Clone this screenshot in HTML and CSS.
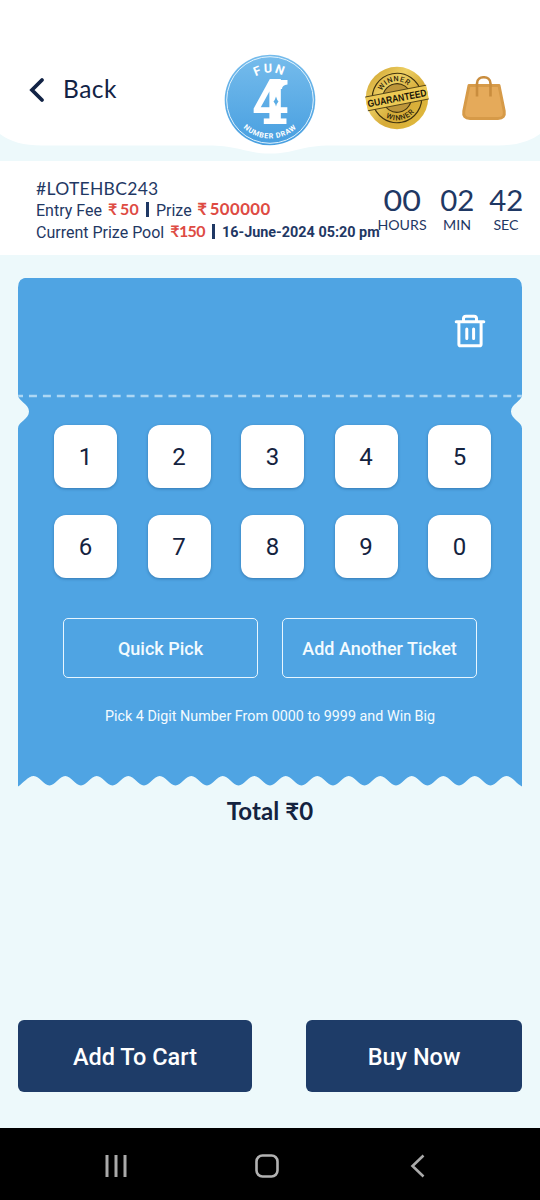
FILE: index.html
```html
<!DOCTYPE html>
<html lang="en">
<head>
<meta charset="utf-8">
<meta name="viewport" content="width=device-width, initial-scale=1">
<title>Fun 4 Number Draw</title>
<link rel="stylesheet" href="styles.css">
</head>
<body>
<div class="app">
  <header class="header">
    <a class="back">
      <svg class="back-icon" width="16" height="26" viewBox="0 0 16 26"><path d="M13 3 3 13 13 23" fill="none" stroke="#122345" stroke-width="3.8" stroke-linecap="round" stroke-linejoin="miter"/></svg>
      <span class="back-label">Back</span>
    </a>
    <svg class="logo" width="92" height="92" viewBox="-46 -46 92 92">
      <defs>
        <linearGradient id="sky" x1="0" y1="0" x2="0" y2="1"><stop offset="0" stop-color="#76bcec"/><stop offset="1" stop-color="#489fe0"/></linearGradient>
        <path id="arcTop" d="M-27.5 0A27.5 27.5 0 0 1 27.5 0"/>
        <path id="arcBottom" d="M-38.5 0A38.5 38.5 0 0 0 38.5 0"/>
      </defs>
      <circle r="45.3" fill="url(#sky)"/>
      <circle r="43.3" fill="none" stroke="#e0f2fd" stroke-width="1"/>
      <text class="logo-fun"><textPath href="#arcTop" startOffset="50%" text-anchor="middle">FUN</textPath></text>
      <text class="logo-four" x="0.5" y="23" text-anchor="middle" textLength="36" lengthAdjust="spacingAndGlyphs">4</text>
      <path d="M9-20H17.5V-15.500Q12-15 12-11H9Z" fill="#fff"/>
      <path d="M6-3.500Q7 0 8.500 1.500Q7 3 6 6.500Q5 3 3.500 1.500Q5 0 6-3.500Z" fill="#5bade5"/>
      <text class="logo-draw"><textPath href="#arcBottom" startOffset="50%" text-anchor="middle">NUMBER DRAW</textPath></text>
    </svg>
    <div class="header-right">
      <svg class="seal" width="66" height="66" viewBox="-33 -33 66 66">
        <defs>
          <linearGradient id="gold" x1="0" y1="0" x2="1" y2="1"><stop offset="0" stop-color="#c99a25"/><stop offset=".35" stop-color="#edcf62"/><stop offset=".6" stop-color="#d6ab38"/><stop offset="1" stop-color="#e3bd3e"/></linearGradient>
          <path id="sealTop" d="M-16.8 0A16.8 16.8 0 0 1 16.8 0"/>
          <path id="sealBottom" d="M-22.3 0A22.3 22.3 0 0 0 22.3 0"/>
        </defs>
        <circle r="31.2" fill="url(#gold)"/>
        <g transform="rotate(-11)">
          <circle r="24.7" fill="none" stroke="#40330f" stroke-width="1.2"/>
          <circle r="14.3" fill="#bd963a" stroke="#40330f" stroke-width="1.1"/>
          <text class="seal-small"><textPath href="#sealTop" startOffset="50%" text-anchor="middle">WINNER</textPath></text>
          <text class="seal-small"><textPath href="#sealBottom" startOffset="50%" text-anchor="middle">WINNER</textPath></text>
          <rect x="-31" y="-7" width="62" height="14" fill="#ecc954"/>
          <path d="M-31-7H31M-31 7H31" stroke="#40330f" stroke-width=".8"/>
          <text class="seal-main" x="0" y="3.7" text-anchor="middle" textLength="60" lengthAdjust="spacingAndGlyphs">GUARANTEED</text>
        </g>
      </svg>
      <svg class="bag" width="46" height="46" viewBox="0 0 46 46">
        <path d="M8 9.5H38L43.2 35C44 40 42 42.5 37 42.5H9C4 42.5 2 40 2.8 35Z" fill="#e5aa5a" stroke="#d69a48" stroke-width="3" stroke-linejoin="round"/>
        <path d="M16 20.5V7.5C16-.8 29.5-.8 29.5 7.5V20.5" fill="none" stroke="#c98d3e" stroke-width="2.6"/>
      </svg>
    </div>
  </header>

  <section class="info">
    <div class="details">
      <div class="code">#LOTEHBC243</div>
      <div class="line"><span>Entry Fee</span><b class="amount fee">₹ 50</b><i class="bar"></i><span>Prize</span><b class="amount prize">₹ 500000</b></div>
      <div class="line"><span>Current Prize Pool</span><b class="amount pool">₹150</b><i class="bar"></i><b class="date">16-June-2024 05:20 pm</b></div>
    </div>
    <div class="timer">
      <div class="unit hours"><b>00</b><span>HOURS</span></div>
      <div class="unit min"><b>02</b><span>MIN</span></div>
      <div class="unit sec"><b>42</b><span>SEC</span></div>
    </div>
  </section>

  <main class="content">
    <section class="ticket">
      <div class="ticket-top">
        <svg width="32" height="34" viewBox="0 0 32 34" fill="none" stroke="#fff" stroke-width="3" stroke-linecap="round" stroke-linejoin="round"><path d="M2.2 7.7H29.8M4.9 8V30.2Q4.9 31.8 6.5 31.8H25.5Q27.1 31.8 27.1 30.2V8M9.5 7V4.6Q9.5 2.2 12 2.2H20Q22.5 2.2 22.5 4.6V7M12.8 15V24.4M19.6 15V24.4"/></svg>
      </div>
      <svg class="perforation" width="504" height="4" viewBox="0 0 504 4"><path d="M-3 2H504" stroke="#add7f4" stroke-width="2.6" stroke-dasharray="8 5.95"/></svg>
      <div class="keys">
        <button>1</button><button>2</button><button>3</button><button>4</button><button>5</button>
        <button>6</button><button>7</button><button>8</button><button>9</button><button>0</button>
      </div>
      <div class="picks"><button>Quick Pick</button><button>Add Another Ticket</button></div>
      <p class="hint">Pick 4 Digit Number From 0000 to 9999 and Win Big</p>
    </section>
    <div class="total">Total ₹0</div>
  </main>

  <footer class="actions"><button class="cart">Add To Cart</button><button class="buy">Buy Now</button></footer>

  <nav class="system">
    <svg width="24" height="26" viewBox="0 0 24 26"><path d="M3 2V24M12 2V24M21 2V24" stroke="#aaa" stroke-width="3"/></svg>
    <svg class="home" width="26" height="26" viewBox="0 0 26 26"><rect x="2.5" y="2.5" width="21" height="21" rx="6" fill="none" stroke="#b2b2b2" stroke-width="2.6"/></svg>
    <svg width="18" height="26" viewBox="0 0 18 26"><path d="M14.5 2.5 3.5 13 14.5 23.5" fill="none" stroke="#aaa" stroke-width="2.6"/></svg>
  </nav>
</div>
</body>
</html>
```

FILE: styles.css
```css
* { box-sizing: border-box; }
body { margin: 0; background: #edf9fb; font-family: Roboto, sans-serif; color: #1f3864; }
button { margin: 0; padding: 0; border: 0; font-family: Roboto, sans-serif; }
svg { display: block; flex: none; }
.app { width: 540px; height: 1200px; display: flex; flex-direction: column; overflow: hidden; }

.header {
  height: 161px; padding-top: 54px; flex: none;
  display: grid; grid-template-columns: 224px 92px 1fr; align-items: start;
  background: #fff;
  clip-path: path("M0 0H540V134Q525 145.5 498 145.5H332C300 145.5 295 153.5 270 153.5C245 153.5 240 145.500 208 145.5H42Q15 145.5 0 134Z");
}
.back { display: flex; align-items: center; padding: 21px 0 0 29px; gap: 18px; }
.back-icon { margin-top: 1px; }
.back-label { font-family: Lato, sans-serif; font-size: 24.5px; line-height: 28px; letter-spacing: .5px; color: #122345; }
.logo-fun { font: 700 12.5px Roboto, sans-serif; fill: #fff; letter-spacing: 2px; }
.logo-four { font: 700 57px "DejaVu Serif", serif; fill: #fff; stroke: #fff; stroke-width: 2px; }
.logo-draw { font: 700 7.2px Roboto, sans-serif; fill: #fff; letter-spacing: .7px; }
.header-right { display: flex; padding: 11px 0 0 48px; gap: 31px; }
.seal { overflow: visible; }
.bag { margin-top: 11px; }
.seal-small { font: 500 7.3px Roboto, sans-serif; fill: #30270d; letter-spacing: .7px; }
.seal-main { font: 700 10px "Liberation Sans", sans-serif; fill: #191507; }

.info { height: 94px; flex: none; background: #fff; padding: 17px 0 0 36px; display: flex; }
.details { width: 346px; white-space: nowrap; flex: none; }
.code { font: 400 17.5px/22px Lato, sans-serif; letter-spacing: .3px; }
.line { display: flex; align-items: center; height: 21.5px; font-size: 16px; }
.amount { color: #de4b43; font: 700 16px/20px Lato, sans-serif; margin-left: 6px; position: relative; top: -1.5px; }
.fee { word-spacing: -1.5px; letter-spacing: .2px; }
.prize { font-size: 16.8px; word-spacing: -2px; letter-spacing: .4px; margin-left: 5.5px; }
.pool { letter-spacing: -.6px; }
.bar { flex: none; width: 2.5px; height: 15px; background: #1f3864; margin: 0 7px 0 7.5px; position: relative; top: -1px; }
.date { font-size: 14.4px; font-weight: 700; }
.timer { display: flex; font-family: Lato, sans-serif; padding-top: 6px; }
.unit { display: flex; flex-direction: column; align-items: center; }
.unit b { font-weight: 400; font-size: 28px; line-height: 32px; transform: scaleX(1.05); }
.unit span { font-size: 14.2px; line-height: 18px; }
.hours { width: 52px; margin-left: -6px; }
.hours b { transform: scaleX(1.15); }
.min { width: 56px; margin-left: 1px; }
.sec { width: 42px; }

.content { flex: 1; padding: 22.5px 18px 0; }
.ticket {
  height: 509px; background: #4fa4e3; display: flex; flex-direction: column;
  clip-path: path("M0 10Q0 0 10 0H494Q504 0 504 10V117C504 124 493 126 493 134C493 142 504 144 504 151V509C498 506 494 498.500 488.25 498.5C482.5 498.5 478 508 472.5 508C467 508 462.500 498.5 456.75 498.5C451 498.5 446.5 508 441 508C435.5 508 431 498.5 425.25 498.5C419.5 498.5 415 508 409.5 508C404 508 399.5 498.5 393.75 498.5C388 498.5 383.5 508 378 508C372.5 508 368 498.5 362.25 498.5C356.5 498.5 352 508 346.5 508C341 508 336.5 498.5 330.75 498.5C325 498.5 320.5 508 315 508C309.5 508 305 498.5 299.25 498.5C293.5 498.5 289 508 283.5 508C278 508 273.5 498.5 267.75 498.5C262 498.5 257.5 508 252 508C246.5 508 242 498.5 236.25 498.5C230.5 498.5 226 508 220.5 508C215 508 210.5 498.5 204.75 498.5C199 498.5 194.5 508 189 508C183.5 508 179 498.5 173.25 498.5C167.5 498.5 163 508 157.5 508C152 508 147.5 498.5 141.75 498.5C136 498.5 131.5 508 126 508C120.5 508 116 498.5 110.25 498.5C104.5 498.5 100 508 94.5 508C89 508 84.5 498.5 78.75 498.5C73 498.5 68.5 508 63 508C57.5 508 53 498.5 47.25 498.5C41.5 498.5 37 508 31.5 508C26 508 21.5 498.5 15.75 498.5C10 498.5 5 506 0 509V151C0 144 11 142 11 134C11 126 0 124 0 117Z");
}
.ticket-top { height: 116px; display: flex; justify-content: flex-end; padding: 36px 36px 0 0; }
.keys { display: grid; grid-template-columns: repeat(5, 63px); justify-content: space-between; row-gap: 27px; padding: 27px 31px 0 36px; }
.keys button { height: 63px; padding-top: 1px; border-radius: 12px; background: #fff; color: #14233f; font-size: 24px; box-shadow: 0 1px 3px rgba(20, 70, 120, .45); }
.picks { display: flex; gap: 24px; padding: 40.5px 45px 0; }
.picks button { flex: 1; height: 60px; border: 1px solid #e8f6ff; border-radius: 5px; background: transparent; color: #f3fbff; font-size: 18px; font-weight: 500; }
.hint { margin: 30px 0 0; text-align: center; color: #f3fbff; font-size: 14.35px; line-height: 18px; }
.total { margin-top: 10px; text-align: center; font: 700 24px/28px Lato, sans-serif; letter-spacing: .1px; color: #14233f; }

.actions { flex: none; height: 108px; display: flex; justify-content: space-between; padding: 0 18px; }
.actions button { height: 72px; padding-top: 1px; border-radius: 6px; background: #1e3c68; color: #fff; font-size: 23.5px; font-weight: 500; }
.cart { width: 234px; }
.buy { width: 216px; }
.system { flex: none; height: 72px; background: #000; display: flex; align-items: center; justify-content: space-between; padding: 4px 113px 0 104px; }
.home { margin-right: 4px; }
```
